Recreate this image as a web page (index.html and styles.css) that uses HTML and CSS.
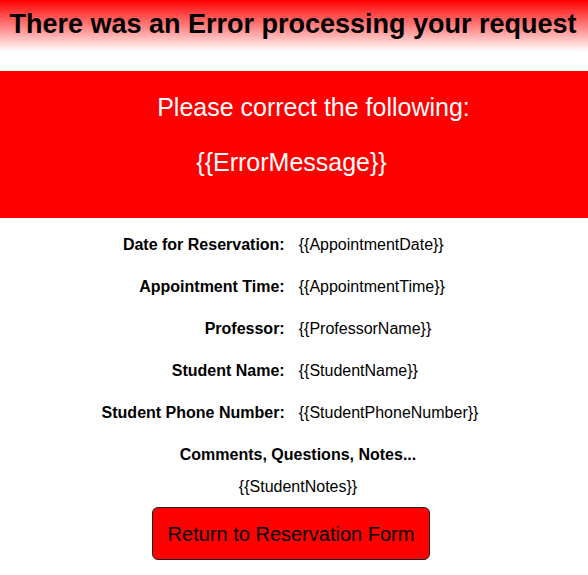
FILE: index.html
```html
<!DOCTYPE html>
<html>
<head>
<meta charset="utf-8">
<link rel="stylesheet" href="styles.css">
</head>
<body>
<div class="header"><h1 class="title">There was an Error processing your request</h1></div>
<div class="errorbox">
  <p class="correct">Please correct the following:</p>
  <p class="errmsg">{{ErrorMessage}}</p>
</div>
<div class="details-wrap">
<table class="details">
  <tr><td class="label">Date for Reservation:</td><td class="value">{{AppointmentDate}}</td></tr>
  <tr><td class="label">Appointment Time:</td><td class="value">{{AppointmentTime}}</td></tr>
  <tr><td class="label">Professor:</td><td class="value">{{ProfessorName}}</td></tr>
  <tr><td class="label">Student Name:</td><td class="value">{{StudentName}}</td></tr>
  <tr><td class="label">Student Phone Number:</td><td class="value">{{StudentPhoneNumber}}</td></tr>
</table>
</div>
<div class="notes">
  <div class="notes-label">Comments, Questions, Notes...</div>
  <div class="notes-value">{{StudentNotes}}</div>
</div>
<div class="actions"><button class="return">Return to Reservation Form</button></div>
</body>
</html>
```
FILE: styles.css
```css
html, body { margin: 0; padding: 0; background: #fff; }
body { font-family: "Liberation Sans", Arial, sans-serif; color: #000; }
.header {
  height: 52px;
  background: linear-gradient(#ff0000, #ffffff);
  display: flex;
  justify-content: center;
  padding-right: 2px;
}
.title { margin: 0; padding-top: 9px; font-size: 27px; font-weight: bold; line-height: 30px; white-space: nowrap; }
.errorbox {
  margin-top: 19px;
  height: 147px;
  background: #ff0000;
  color: #fff;
  display: flex;
  flex-direction: column;
  align-items: center;
}
.correct { margin: 22px 0 0 39px; font-size: 25px; line-height: 29px; }
.errmsg { margin: 26px 5px 0 0; font-size: 25px; line-height: 29px; }
.details-wrap { display: flex; justify-content: center; padding-right: 8px; margin-top: 6px; }
.details { border-collapse: collapse; font-size: 16px; }
.details td { padding: 0; height: 42px; }
.label { font-weight: bold; text-align: right; padding-right: 14px !important; }
.value { text-align: left; }
.notes { text-align: center; font-size: 16px; padding-left: 8px; }
.notes-label { font-weight: bold; line-height: 18px; margin-top: 12px; }
.notes-value { margin-top: 14px; line-height: 18px; }
.actions { display: flex; justify-content: center; margin-top: 11px; padding-right: 6px; }
.return {
  background: #ff0000;
  border: 1px solid #222;
  border-radius: 6px;
  width: 278px;
  height: 53px;
  font-family: "Liberation Sans", Arial, sans-serif;
  font-size: 20px;
  color: #000;
  padding: 2px 0 0 0;
}
```
